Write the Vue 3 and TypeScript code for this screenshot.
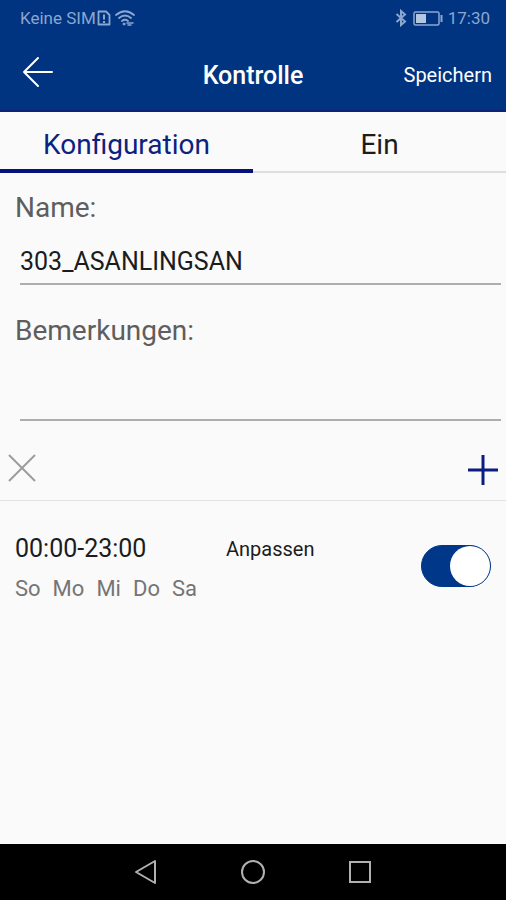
<script setup lang="ts">
import { ref } from 'vue'

type TabId = 'config' | 'on'

interface Schedule {
  id: number
  range: string
  days: string[]
  repeat: string
  enabled: boolean
}

const tabs: { id: TabId; label: string }[] = [
  { id: 'config', label: 'Konfiguration' },
  { id: 'on', label: 'Ein' },
]

const activeTab = ref<TabId>('config')
const deviceName = ref('303_ASANLINGSAN')
const remarks = ref('')
const schedules = ref<Schedule[]>([
  { id: 1, range: '00:00-23:00', days: ['So', 'Mo', 'Mi', 'Do', 'Sa'], repeat: 'Anpassen', enabled: true },
])
</script>

<template>
  <div class="screen">
    <div class="status">
      <div class="status-side">
        <span>Keine SIM</span>
        <svg class="sim" width="14" height="16" viewBox="0 0 14 16" fill="none" stroke="currentColor" aria-hidden="true">
          <path d="M1.5 1.5H9L12.500 5V14.500H1.500Z" stroke-width="1.800" stroke-linejoin="round" />
          <path d="M7 4.500V9.500M7 11V13" stroke-width="2" />
        </svg>
        <svg width="20" height="16" viewBox="0 0 20 16" fill="none" stroke="currentColor" stroke-width="1.800" stroke-linecap="round" aria-hidden="true">
          <path d="M1 5Q10-2.500 19 5M4 8Q10 3 16 8M7 11Q10 8.500 13 11" />
          <circle cx="9" cy="14" r="1" fill="currentColor" stroke-width="1" />
          <path d="M12 13H18M16 15H13" stroke-width="1.500" />
        </svg>
      </div>
      <div class="status-side">
        <svg width="12" height="18" viewBox="0 0 12 18" fill="none" stroke="currentColor" stroke-width="2" aria-hidden="true">
          <path d="M1.500 5L10 12.500L6 16V2L10 5.500L1.500 13" />
        </svg>
        <svg class="battery" width="30" height="15" viewBox="0 0 30 15" fill="none" aria-hidden="true">
          <rect x="1" y="1" width="25" height="13" rx="1.500" stroke="currentColor" stroke-width="1.500" />
          <rect x="3" y="3" width="10" height="9" fill="#b4c7e2" />
          <path d="M28.500 4V11" stroke="currentColor" stroke-width="2" />
        </svg>
        <span>17:30</span>
      </div>
    </div>

    <header class="appbar">
      <button class="icon-button back" type="button" aria-label="Zurück">
        <svg width="32" height="32" viewBox="0 0 32 32" fill="none" stroke="currentColor" stroke-width="2" stroke-linecap="round" stroke-linejoin="round">
          <path d="M16 2L2 16L16 30M2 16H30" />
        </svg>
      </button>
      <h1 class="title">Kontrolle</h1>
      <button class="save" type="button">Speichern</button>
    </header>

    <nav class="tabs" role="tablist">
      <button
        v-for="tab in tabs"
        :key="tab.id"
        type="button"
        role="tab"
        class="tab"
        :class="{ active: activeTab === tab.id }"
        :aria-selected="activeTab === tab.id"
        @click="activeTab = tab.id"
      >
        {{ tab.label }}
      </button>
    </nav>

    <main class="content">
      <div class="field">
        <label class="label" for="device-name">Name:</label>
        <input id="device-name" v-model="deviceName" class="input" type="text" />
      </div>
      <div class="field remarks">
        <label class="label" for="remarks">Bemerkungen:</label>
        <input id="remarks" v-model="remarks" class="input" type="text" />
      </div>

      <div class="tools">
        <button class="icon-button remove" type="button" aria-label="Löschen">
          <svg width="28" height="28" viewBox="0 0 28 28" fill="none" stroke="currentColor" stroke-width="2">
            <path d="M1 1L27 27M27 1L1 27" />
          </svg>
        </button>
        <button class="icon-button add" type="button" aria-label="Hinzufügen">
          <svg width="30" height="30" viewBox="0 0 30 30" fill="none" stroke="currentColor" stroke-width="3">
            <path d="M15 0V30M0 15H30" />
          </svg>
        </button>
      </div>

      <section v-for="item in schedules" :key="item.id" class="schedule">
        <div class="times">
          <span class="range">{{ item.range }}</span>
          <span class="days"><span v-for="day in item.days" :key="day">{{ day }}</span></span>
        </div>
        <span class="repeat">{{ item.repeat }}</span>
        <input v-model="item.enabled" class="switch" type="checkbox" role="switch" :aria-label="item.range" />
      </section>
    </main>

    <footer class="navbar">
      <button class="icon-button" type="button" aria-label="Zurück">
        <svg width="26" height="26" viewBox="0 0 26 26" fill="none" stroke="currentColor" stroke-width="2" stroke-linejoin="round">
          <path d="M22 2V24L3 13Z" />
        </svg>
      </button>
      <button class="icon-button" type="button" aria-label="Startseite">
        <svg width="26" height="26" viewBox="0 0 26 26" fill="none" stroke="currentColor" stroke-width="2">
          <circle cx="13" cy="13" r="11" />
        </svg>
      </button>
      <button class="icon-button" type="button" aria-label="Übersicht">
        <svg width="26" height="26" viewBox="0 0 26 26" fill="none" stroke="currentColor" stroke-width="2">
          <rect x="3" y="3" width="20" height="20" />
        </svg>
      </button>
    </footer>
  </div>
</template>

<style>
body {
  margin: 0;
  background: #fafafa;
}
</style>

<style scoped>
.screen {
  display: flex;
  flex-direction: column;
  min-height: 100vh;
  background: #fafafa;
  color: #1c1c1c;
  font-family: Roboto, "Liberation Sans", sans-serif;
}

button,
input {
  box-sizing: border-box;
  margin: 0;
  padding: 0;
  border: 0;
  border-radius: 0;
  background: none;
  color: inherit;
  font-family: inherit;
}

.icon-button {
  display: flex;
}

.status {
  display: flex;
  justify-content: space-between;
  align-items: center;
  height: 36px;
  padding: 0 16px 0 20px;
  background: #003480;
  color: #8ba6cf;
  font-size: 17px;
}

.status-side {
  display: flex;
  align-items: center;
}

.sim {
  margin: 0 4px 0 1px;
}

.battery {
  margin: 0 5px 0 6px;
}

.appbar {
  display: grid;
  grid-template-columns: 1fr auto 1fr;
  align-items: center;
  height: 76px;
  box-sizing: border-box;
  padding: 4px 14px 0;
  border-bottom: 2px solid #10207c;
  background: #003480;
  color: #fff;
}

.back {
  padding: 0 8px 6px;
}

.title {
  margin: 0;
  font-size: 25px;
  font-weight: 500;
}

.save {
  justify-self: end;
  font-size: 20px;
}

.tabs {
  display: flex;
}

.tab {
  flex: 1;
  height: 61px;
  padding-top: 6px;
  border-bottom: 2px solid #dedede;
  font-size: 28px;
}

.tab.active {
  padding-top: 8px;
  border-bottom: 4px solid #04127a;
  color: #0c2280;
}

.content {
  flex: 1;
}

.field {
  display: flex;
  flex-direction: column;
  padding: 18px 5px 0 15px;
}

.remarks {
  padding-top: 29px;
}

.label {
  color: #5e5e5e;
  font-size: 28px;
  line-height: 34px;
}

.input {
  height: 60px;
  margin-left: 5px;
  padding-top: 14px;
  border-bottom: 2px solid #adadad;
  font-size: 25px;
  outline: none;
}

.remarks .input {
  height: 73px;
}

.tools {
  display: flex;
  justify-content: space-between;
  align-items: center;
  height: 79px;
  padding: 0 8px;
  border-bottom: 1px solid #e2e2e2;
}

.remove {
  padding-top: 14px;
  color: #9c9c9c;
}

.add {
  padding-top: 18px;
  color: #0c1d80;
}

.schedule {
  display: flex;
  align-items: flex-start;
  padding: 30px 15px;
}

.times {
  display: flex;
  flex-direction: column;
  width: 211px;
}

.range {
  font-size: 25px;
  line-height: 36px;
}

.days {
  display: flex;
  gap: 12px;
  color: #757575;
  font-size: 22px;
  line-height: 44px;
}

.repeat {
  flex: 1;
  font-size: 20px;
  line-height: 36px;
}

.switch {
  display: flex;
  justify-content: flex-end;
  width: 70px;
  height: 42px;
  margin-top: 14px;
  border: 1px solid #003789;
  border-radius: 21px;
  background: #003789;
  appearance: none;
}

.switch::before {
  width: 40px;
  height: 40px;
  border-radius: 50%;
  background: #fff;
  content: "";
}

.switch:not(:checked) {
  justify-content: flex-start;
  background: #c4c4c4;
  border-color: #c4c4c4;
}

.navbar {
  display: flex;
  justify-content: center;
  align-items: center;
  gap: 81px;
  height: 56px;
  background: #000;
  color: #b0b0b0;
}
</style>
